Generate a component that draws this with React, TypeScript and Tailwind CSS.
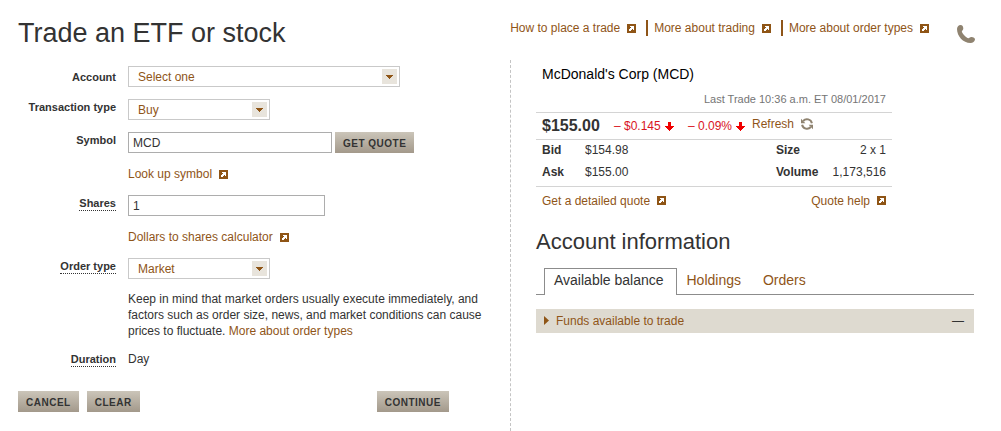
import { useState } from 'react';
import type { ReactNode } from 'react';

const linkClasses = 'text-[#8f5518] hover:underline';
const valueClasses = 'text-xs text-[#333333]';

function PopupIcon() {
  return (
    <svg className="ml-[7px] inline-block h-[9px] w-[9px] shrink-0" viewBox="0 0 9 9" shapeRendering="crispEdges" aria-hidden="true">
      <rect width="9" height="9" fill="#8f5516" />
      <path d="M3 2h4v4h-1v-1h-1v1h-1v1h-2v-2h1v-1h1v-1h-1z" fill="#fff" />
    </svg>
  );
}

function PopupLink({ children }: { children: ReactNode }) {
  return (
    <a href="#" className={`inline-flex items-center whitespace-nowrap text-xs leading-4 ${linkClasses}`}>
      {children}
      <PopupIcon />
    </a>
  );
}

function DownArrow() {
  return (
    <svg className="ml-1 h-[9px] w-[9px]" viewBox="0 0 9 9" shapeRendering="crispEdges" aria-hidden="true">
      <path d="M3 0h3v4h3v1h-1v1h-1v1h-1v1h-1v1h-1v-1h-1v-1h-1v-1h-1v-1h-1v-1h3z" fill="#f00000" />
    </svg>
  );
}

function PhoneIcon() {
  return (
    <svg className="h-[18px] w-[18px]" viewBox="0 0 18 18" aria-hidden="true">
      <path
        d="M3.500 0C5.500 0 6.300 1.800 6.300 3.500 6.200 5 5.200 5.500 4.800 6.500 5.500 9 9 12.600 11.500 13.300c1-.6 1.500-1.500 3-1.400 2 .1 3.500 1.100 3.500 2.600-.5 2-2 3.500-4.500 3.500C6 18 0 11 0 4 0 1.800 1.500 0 3.500 0z"
        fill="#8f8370"
      />
    </svg>
  );
}

function RefreshIcon() {
  return (
    <svg className="h-3 w-3" viewBox="0 0 12 12" aria-hidden="true">
      <path d="M10.900 5.200A5 5 0 0 0 2.200 3M1.100 6.800A5 5 0 0 0 9.800 9" fill="none" stroke="#8f8370" strokeWidth="2" />
      <path d="M0 .8v4.400h4.400zM12 11.200V6.800H7.600z" fill="#8f8370" />
    </svg>
  );
}

interface SelectFieldProps {
  id: string;
  options: string[];
  className: string;
}

function SelectField({ id, options, className }: SelectFieldProps) {
  return (
    <div className={`grid h-[21px] items-center border border-[#c9c9c9] bg-white ${className}`}>
      <select id={id} className="col-start-1 row-start-1 h-[19px] w-full appearance-none bg-transparent pr-6 pl-[9px] text-xs text-[#8f5518]">
        {options.map((option) => (
          <option key={option}>{option}</option>
        ))}
      </select>
      <span className="pointer-events-none col-start-1 row-start-1 mr-0.5 flex h-[15px] w-[15px] items-center justify-center justify-self-end bg-[#e8e4dc]">
        <svg className="h-1 w-[7px]" viewBox="0 0 7 4" shapeRendering="crispEdges" aria-hidden="true">
          <path d="M0 0h7v1h-1v1h-1v1h-1v1h-1v-1h-1v-1h-1v-1h-1z" fill="#8f5516" />
        </svg>
      </span>
    </div>
  );
}

interface RowProps {
  label: string;
  htmlFor?: string;
  dotted?: boolean;
  className?: string;
  labelClassName?: string;
  children: ReactNode;
}

function Row({ label, htmlFor, dotted, className = '', labelClassName = 'pt-px', children }: RowProps) {
  const textClasses = dotted ? 'border-b border-dotted border-[#333333]' : '';
  return (
    <div className={`flex items-start ${className}`}>
      <div className={`mr-3 flex w-[98px] shrink-0 justify-end ${labelClassName}`}>
        <label htmlFor={htmlFor} className={`text-[11px] leading-[14px] font-bold whitespace-nowrap text-[#333333] ${textClasses}`}>
          {label}
        </label>
      </div>
      <div className="min-w-0 flex-1">{children}</div>
    </div>
  );
}

function ActionButton({ children, type = 'button' }: { children: ReactNode; type?: 'button' | 'submit' }) {
  return (
    <button
      type={type}
      className="h-[21px] bg-linear-to-b from-[#cbc5b9] to-[#a3998b] px-2 pt-0.5 text-[10px] font-bold tracking-wider whitespace-nowrap text-[#333333]"
    >
      {children}
    </button>
  );
}

function TradeForm() {
  return (
    <form onSubmit={(e) => e.preventDefault()}>
      <Row label="Account" htmlFor="account" labelClassName="pt-1">
        <SelectField id="account" options={['Select one']} className="w-[272px]" />
      </Row>
      <Row label="Transaction type" htmlFor="transaction" className="mt-3">
        <SelectField id="transaction" options={['Buy', 'Sell']} className="w-[142px]" />
      </Row>
      <Row label="Symbol" htmlFor="symbol" className="mt-3">
        <div className="flex gap-[3px]">
          <input id="symbol" type="text" defaultValue="MCD" className="h-[21px] w-[204px] border border-[#adadad] px-1 text-xs text-[#333333]" />
          <ActionButton>GET QUOTE</ActionButton>
        </div>
        <div className="mt-[13px] flex">
          <PopupLink>Look up symbol</PopupLink>
        </div>
      </Row>
      <Row label="Shares" htmlFor="shares" dotted className="mt-[13px]">
        <input id="shares" type="text" defaultValue="1" className="block h-[21px] w-[197px] border border-[#adadad] px-1 text-xs text-[#333333]" />
        <div className="mt-[13px] flex">
          <PopupLink>Dollars to shares calculator</PopupLink>
        </div>
      </Row>
      <Row label="Order type" htmlFor="order-type" dotted className="mt-[13px]">
        <SelectField id="order-type" options={['Market', 'Limit']} className="w-[142px]" />
        <p className="mt-3 text-xs leading-4 text-[#333333]">
          Keep in mind that market orders usually execute immediately, and factors such as order size, news, and market
          conditions can cause prices to fluctuate.{' '}
          <a href="#" className={linkClasses}>More about order types</a>
        </p>
      </Row>
      <Row label="Duration" htmlFor="duration" dotted className="mt-3">
        <output id="duration" className={`block leading-4 ${valueClasses}`}>Day</output>
      </Row>
      <div className="mt-6 flex">
        <div className="flex flex-1 gap-2">
          <ActionButton>CANCEL</ActionButton>
          <ActionButton>CLEAR</ActionButton>
        </div>
        <div className="mr-[61px] flex">
          <ActionButton type="submit">CONTINUE</ActionButton>
        </div>
      </div>
    </form>
  );
}

function Quote() {
  return (
    <section className="mr-[82px]">
      <h2 className="px-1.5 text-sm leading-5 text-black">McDonald's Corp (MCD)</h2>
      <p className="mt-[7px] px-1.5 text-right text-[11px] leading-4 text-[#757575]">Last Trade 10:36 a.m. ET 08/01/2017</p>
      <div className="mt-[5px] flex h-7 items-center border-y border-[#d4d4d4] pl-1.5 text-xs text-[#d9141e]">
        <strong className="w-[72px] text-base text-[#333333]">$155.00</strong>
        <span className="flex w-[74px] items-center whitespace-nowrap">– $0.145<DownArrow /></span>
        <span className="flex w-16 items-center whitespace-nowrap">– 0.09%<DownArrow /></span>
        <button type="button" className="flex items-center gap-[7px] pb-1 text-[#8f5518]">
          Refresh
          <RefreshIcon />
        </button>
      </div>
      <table className="w-full border-b border-[#d4d4d4] text-left text-xs text-[#333333]">
        <tbody>
          <tr className="h-[19px]">
            <th scope="row" className="w-[49px] pl-1.5">Bid</th>
            <td>$154.98</td>
            <th scope="row" className="w-[50px]">Size</th>
            <td className="w-[66px] pr-1.5 text-right">2 x 1</td>
          </tr>
          <tr className="h-[27px]">
            <th scope="row" className="pl-1.5">Ask</th>
            <td>$155.00</td>
            <th scope="row">Volume</th>
            <td className="pr-1.5 text-right">1,173,516</td>
          </tr>
        </tbody>
      </table>
      <div className="mt-1.5 flex justify-between px-1.5">
        <PopupLink>Get a detailed quote</PopupLink>
        <PopupLink>Quote help</PopupLink>
      </div>
    </section>
  );
}

const tabs = ['Available balance', 'Holdings', 'Orders'];

function AccountInformation() {
  const [active, setActive] = useState(tabs[0]);

  return (
    <section className="mt-[21px]">
      <h2 className="text-[22px] leading-6 text-[#333333]">Account information</h2>
      <div role="tablist" className="mt-[14px] flex border-b border-[#8c8c8c] pl-2">
        {tabs.map((tab) => (
          <button
            key={tab}
            type="button"
            role="tab"
            aria-selected={tab === active}
            onClick={() => setActive(tab)}
            className={
              tab === active
                ? '-mb-px h-[27px] border border-b-0 border-[#8c8c8c] bg-white pr-3 pb-[3px] pl-[9px] text-sm whitespace-nowrap text-[#333333]'
                : 'h-[26px] pr-3 pb-px pl-[10px] text-sm whitespace-nowrap text-[#8f5518]'
            }
          >
            {tab}
          </button>
        ))}
      </div>
      <div className="mt-[14px] flex h-6 items-center bg-[#dedad0] px-2">
        <button type="button" className="flex flex-1 items-center gap-[7px] text-xs text-[#8f5518]">
          <svg className="h-[9px] w-[5px]" viewBox="0 0 5 9" aria-hidden="true">
            <path d="M0 0 5 4.500 0 9z" fill="#8f5516" />
          </svg>
          Funds available to trade
        </button>
        <span className="mr-0.5 text-xs text-[#333333]">—</span>
      </div>
    </section>
  );
}

export default function App() {
  return (
    <div className="bg-white font-['Liberation_Sans',Arial,sans-serif]">
      <header className="flex h-[60px] items-start pr-[26px] pl-[18px]">
        <h1 className="flex-1 pt-[17px] text-[27px] leading-8 text-[#333333]">Trade an ETF or stock</h1>
        <nav className="flex pt-5">
          <div className="flex border-r-2 border-[#8f5518] pr-[10px]">
            <PopupLink>How to place a trade</PopupLink>
          </div>
          <div className="flex border-r-2 border-[#8f5518] pr-[10px] pl-1.5">
            <PopupLink>More about trading</PopupLink>
          </div>
          <div className="flex pl-1.5">
            <PopupLink>More about order types</PopupLink>
          </div>
        </nav>
        <button type="button" aria-label="Call us" className="ml-7 pt-[25px]">
          <PhoneIcon />
        </button>
      </header>
      <main className="flex pr-[27px] pl-[18px]">
        <div className="min-w-0 flex-1 pt-1.5">
          <TradeForm />
        </div>
        <aside className="w-[464px] shrink-0 border-l border-dashed border-[#c4c4c4] pt-1 pb-[98px] pl-[25px]">
          <Quote />
          <AccountInformation />
        </aside>
      </main>
    </div>
  );
}
